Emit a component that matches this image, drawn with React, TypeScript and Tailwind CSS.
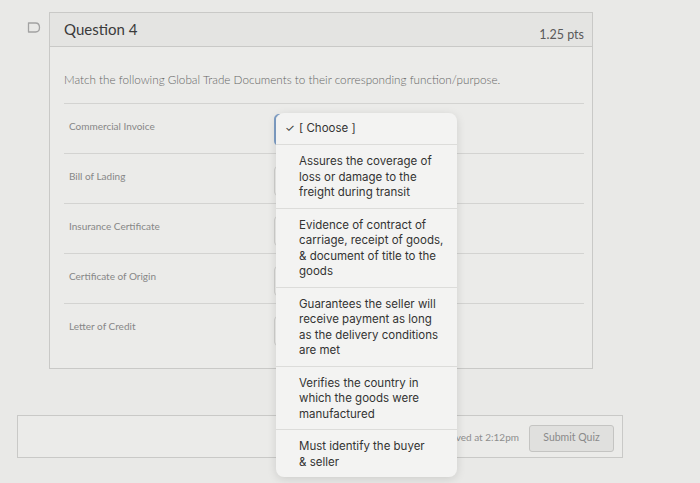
import React from "react";

const rows = [
  "Commercial Invoice",
  "Bill of Lading",
  "Insurance Certificate",
  "Certificate of Origin",
  "Letter of Credit",
];

const options: string[][] = [
  ["Assures the coverage of", "loss or damage to the", "freight during transit"],
  ["Evidence of contract of", "carriage, receipt of goods,", "& document of title to the", "goods"],
  ["Guarantees the seller will", "receive payment as long", "as the delivery conditions", "are met"],
  ["Verifies the country in", "which the goods were", "manufactured"],
  ["Must identify the buyer", "& seller"],
];

export default function App() {
  return (
    <div className="relative w-[700px] h-[483px] overflow-hidden bg-[#e9e9e7] font-['Lato',sans-serif]">
      <div className="flex pt-[12px] pl-[27px]">
        <div className="w-[22px] pt-[10px]">
          <svg width="14" height="11" viewBox="0 0 14 11" fill="none">
            <path
              d="M1.5 1 H8.5 Q12.5 1 12.5 5.5 Q12.5 10 8.5 10 H1.5 Z"
              stroke="#a2a2a2"
              strokeWidth="1.3"
              strokeLinejoin="round"
            />
          </svg>
        </div>
        <div className="w-[544px] border border-[#c9c9c7] bg-[#ebebe9]">
          <div className="h-[34px] flex items-center justify-between pl-[14px] pr-[8px] bg-[#e4e4e2] border-b border-[#c9c9c7]">
            <span className="text-[15px] text-[#3a3a3a]">Question 4</span>
            <span className="text-[12.5px] text-[#5a5a5a] pt-[12px]">1.25 pts</span>
          </div>
          <div className="px-[14px] pb-[14px]">
            <p className="pt-[25px] pb-[16px] text-[11.7px] leading-[15px] text-[#666666] font-light whitespace-nowrap">
              Match the following Global Trade Documents to their corresponding function/purpose.
            </p>
            <div className="border-t border-[#d3d3d1] w-[520px]">
              {rows.map((r, i) => (
                <div
                  key={r}
                  className={`flex h-[50px] ${i < rows.length - 1 ? "border-b border-[#d3d3d1]" : ""}`}
                >
                  <div className="w-[210px] pl-[5px] pt-[15px] text-[10px] text-[#878787]">{r}</div>
                  <div
                    className={
                      i === 0
                        ? "mt-[10px] h-[32px] w-[180px] rounded-[5px] border-2 border-[#7f9fc6] bg-[#efefed]"
                        : "mt-[12px] h-[30px] w-[180px] rounded-[4px] border border-[#cfcfcd] bg-[#ececea]"
                    }
                  />
                </div>
              ))}
            </div>
          </div>
        </div>
      </div>

      <div className="mt-[46px] ml-[17px] w-[606px] h-[43px] border border-[#c9c9c7] bg-[#ebebe9] flex items-center justify-end pr-[8px] gap-[10px]">
        <span className="text-[10px] text-[#8e8e8e] pt-[2px]">Quiz saved at 2:12pm</span>
        <div className="w-[85px] h-[27px] mt-[3px] rounded-[3px] border border-[#c4c4c2] bg-[#e0e0de] flex items-center justify-center text-[10.5px] text-[#8a8a8a]">
          Submit Quiz
        </div>
      </div>

      <div className="absolute left-[276px] top-[113px] w-[181px] rounded-[8px] bg-[#f3f3f2] shadow-[0_2px_10px_rgba(0,0,0,0.12)] font-['Inter',sans-serif] text-[11.5px] leading-[15.5px] text-[#333]">
        <div className="flex items-center h-[32px] pl-[9px] border-b border-[#dcdcda]">
          <span className="w-[14px] text-[11px]">✓</span>
          <span>[ Choose ]</span>
        </div>
        {options.map((lines, i) => (
          <div
            key={i}
            className={`pl-[23px] pt-[9px] pb-[7px] ${i < options.length - 1 ? "border-b border-[#dcdcda]" : ""}`}
          >
            {lines.map((l) => (
              <div key={l} className="whitespace-nowrap">
                {l}
              </div>
            ))}
          </div>
        ))}
      </div>
    </div>
  );
}
